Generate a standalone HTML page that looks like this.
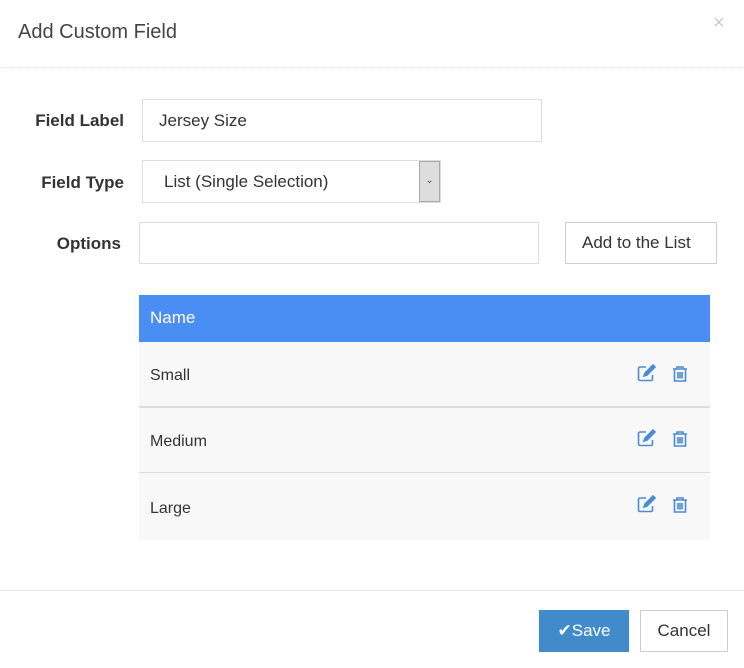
<!DOCTYPE html>
<html><head><style>
*{box-sizing:border-box;margin:0;padding:0}
body{width:744px;height:668px;background:#fff;font-family:"Liberation Sans",sans-serif;color:#333;position:relative;overflow:hidden}
.a{position:absolute}
.in{position:absolute;border:1px solid #ddd;background:#fff;font-size:17px;color:#333;padding-left:16px;display:flex;align-items:center}
.lbl{position:absolute;font-weight:bold;font-size:17px;color:#333;text-align:right;width:110px}
.row{position:absolute;left:139px;width:571px;background:#f8f8f8;font-size:16px;color:#333;padding-left:11px;padding-top:4px;display:flex;align-items:center}
.ic{position:absolute}
</style></head><body>
<div class="a" style="left:18px;top:21px;font-size:20px;color:#444">Add Custom Field</div>
<div class="a" style="left:713px;top:12px;font-size:20px;color:#ccc">×</div>
<div class="a" style="left:0;top:67px;width:744px;border-top:1px dotted #e3e3e3"></div>

<div class="lbl" style="left:14px;top:111px">Field Label</div>
<div class="in" style="left:142px;top:99px;width:400px;height:43px">Jersey Size</div>
<div class="lbl" style="left:14px;top:173px">Field Type</div>
<div class="in" style="left:142px;top:160px;width:299px;height:43px;padding-left:21px">List (Single Selection)
<div class="a" style="right:0;top:0;width:21px;height:41px;background:#ddd;border:1px solid #aaa;font-size:10px;color:#555;text-align:center;line-height:38px">&#8964;</div></div>
<div class="lbl" style="left:11px;top:234px">Options</div>
<div class="in" style="left:139px;top:222px;width:400px;height:42px"></div>
<div class="in" style="left:565px;top:222px;width:152px;height:42px;border-color:#ccc;padding-left:16px">Add to the List</div>

<div class="a" style="left:139px;top:295px;width:571px;height:47px;background:#4b8ef3;color:#fff;font-size:17px;padding-left:11px;line-height:46px">Name</div>
<div class="row" style="top:342px;height:66px;border-bottom:2px solid #ddd">Small</div>
<div class="row" style="top:408px;height:65px;border-bottom:1px solid #ddd">Medium</div>
<div class="row" style="top:473px;height:67px">Large</div>

<svg class="ic" width="744" height="668" style="left:0;top:0" viewBox="0 0 744 668">
<g fill="none" stroke="#4a8bd6" stroke-width="1.6">
<g id="r1">
<path d="M646 367h-6a1.5 1.5 0 0 0-1.5 1.5v10.5a1.5 1.5 0 0 0 1.5 1.5h11a1.5 1.5 0 0 0 1.5-1.5v-4"/>
<path d="M644 376l1-3 8-8 2 2-8 8z" fill="#4a8bd6"/>
<path d="M673 369h14M677 369v-2h6v2M674.5 369v12h11v-12M678 372v6.5M680 372v6.5M682 372v6.5"/>
</g>
<use href="#r1" y="65"/>
<use href="#r1" y="131"/>
</g></svg>

<div class="a" style="left:0;top:590px;width:744px;border-top:1px solid #e5e5e5"></div>
<div class="a" style="left:539px;top:610px;width:90px;height:42px;background:#418bcb;color:#fff;font-size:17px;line-height:42px;text-align:center">✔Save</div>
<div class="a" style="left:640px;top:610px;width:88px;height:42px;border:1px solid #ccc;color:#333;font-size:17px;line-height:40px;text-align:center">Cancel</div>
</body></html>
